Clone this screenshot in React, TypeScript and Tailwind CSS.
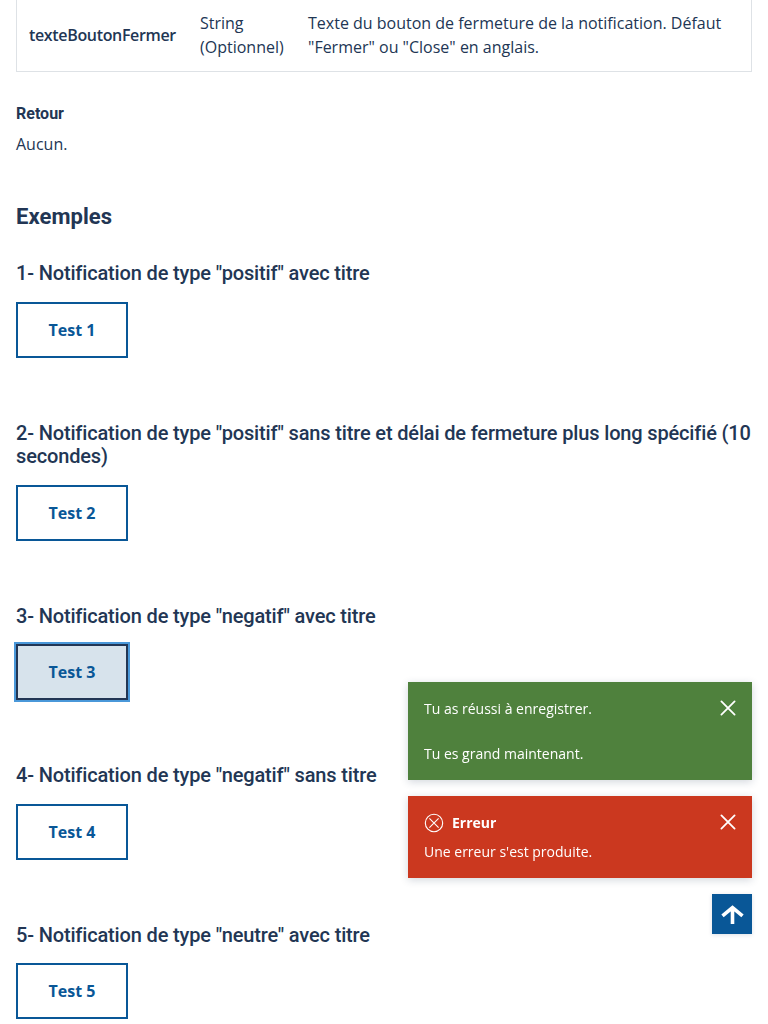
import React from 'react';

type Example = { id: number; title: string; focused?: boolean };

const examples: Example[] = [
  { id: 1, title: '1- Notification de type "positif" avec titre' },
  { id: 2, title: '2- Notification de type "positif" sans titre et délai de fermeture plus long spécifié (10 secondes)' },
  { id: 3, title: '3- Notification de type "negatif" avec titre', focused: true },
  { id: 4, title: '4- Notification de type "negatif" sans titre' },
  { id: 5, title: '5- Notification de type "neutre" avec titre' },
];

function ExampleSection({ id, title, focused }: Example) {
  const base = 'block h-14 w-28 border-2 font-bold text-base leading-6 text-[#095797]';
  const state = focused
    ? 'border-[#223654] bg-[#d7e3ec] outline-2 outline-[#4a98d9]'
    : 'border-[#095797] bg-white';
  return (
    <section className="mb-16">
      <h3 className="-mr-2 mb-[16.6px] font-[Roboto,sans-serif] text-[20px] font-medium leading-[23px] tracking-[-0.155px]">{title}</h3>
      <button className={`${base} ${state}`}>Test {id}</button>
    </section>
  );
}

function CloseButton() {
  return (
    <button aria-label="Fermer" className="flex size-4 shrink-0 items-center justify-center">
      <svg width="16" height="16" viewBox="0 0 16 16" fill="none" stroke="white" strokeWidth="1.8" strokeLinecap="round">
        <path d="M1.4 1.4 14.6 14.6M14.6 1.4 1.4 14.6" />
      </svg>
    </button>
  );
}

export default function App() {
  return (
    <div className="h-screen overflow-hidden bg-white px-4 font-['Open_Sans',sans-serif] text-base text-[#223654]">
      <div className="flex h-[72px] items-start border border-t-0 border-[#dee2e6] pt-[11px] leading-6">
        <div className="w-[171px] pl-3 pt-3 font-semibold tracking-[-0.34px]">texteBoutonFermer</div>
        <div className="w-[108px] pl-3">String (Optionnel)</div>
        <div className="flex-1 px-3">
          Texte du bouton de fermeture de la notification. Défaut "Fermer" ou "Close" en anglais.
        </div>
      </div>
      <h4 className="mt-8 font-[Roboto,sans-serif] text-base font-bold leading-[19px]">Retour</h4>
      <p className="mt-[9px] leading-6">Aucun.</p>
      <h2 className="mt-[47px] mb-[32.4px] font-[Roboto,sans-serif] text-[22px] font-bold leading-[27px] tracking-[0.06px]">Exemples</h2>
      {examples.map((e) => (
        <ExampleSection key={e.id} {...e} />
      ))}

      <div className="fixed right-4 top-[682px] flex w-[344px] flex-col items-end gap-4 text-sm leading-[21px] text-white">
        <div className="flex h-[98px] w-full justify-between bg-[#4f813d] px-4 shadow-[0_2px_8px_rgba(34,54,84,0.2)]">
          <div className="pt-4">
            <p>Tu as réussi à enregistrer.</p>
            <p className="mt-6">Tu es grand maintenant.</p>
          </div>
          <div className="pt-[18px]"><CloseButton /></div>
        </div>
        <div className="flex h-[82px] w-full justify-between bg-[#cb381f] px-4 shadow-[0_2px_8px_rgba(34,54,84,0.2)]">
          <div className="pt-4">
            <div className="flex items-center gap-2">
              <svg width="20" height="20" viewBox="0 0 20 20" fill="none" stroke="white" strokeWidth="1.1">
                <circle cx="10" cy="10" r="8.7" />
                <path d="m5.4 5.4 9.2 9.2m0-9.2-9.2 9.2" />
              </svg>
              <strong className="font-bold">Erreur</strong>
            </div>
            <p className="mt-2">Une erreur s'est produite.</p>
          </div>
          <div className="pt-[18px]"><CloseButton /></div>
        </div>
        <button aria-label="Haut de page" className="flex size-10 items-center justify-center bg-[#095797] shadow-[0_1px_4px_rgba(34,54,84,0.15)]">
          <svg width="40" height="40" viewBox="0 0 40 40" fill="none" stroke="white" strokeWidth="3.6">
            <path d="M20.5 30V13.5M10.5 21.8l10-8.3 10 8.3" />
          </svg>
        </button>
      </div>
    </div>
  );
}
